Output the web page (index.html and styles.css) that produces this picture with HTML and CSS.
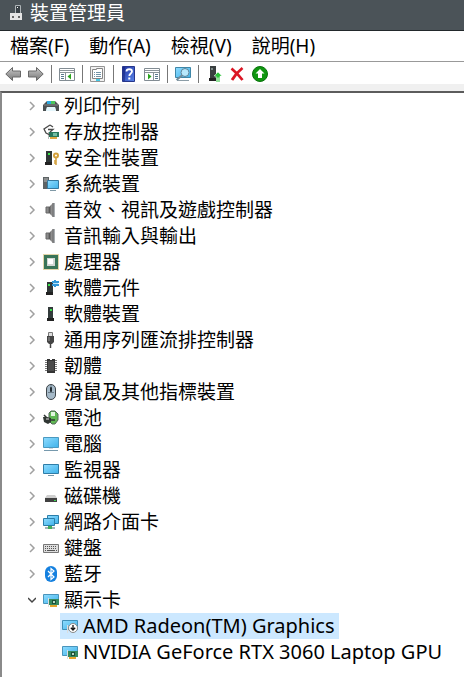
FILE: index.html
```html
<!DOCTYPE html>
<html lang="zh-Hant">

<head>
  <meta charset="UTF-8">
  <meta name="viewport" content="width=device-width, initial-scale=1.0">
  <title>裝置管理員</title>
  <link rel="stylesheet" href="styles.css">
</head>

<body>
  <!-- Icons used more than once -->
  <svg class="defs" aria-hidden="true">
    <defs>
      <linearGradient id="screen" x1="0" y1="0" x2="1" y2="1">
        <stop offset="0" stop-color="#8fdcff" />
        <stop offset="1" stop-color="#3fb2ea" />
      </linearGradient>
      <linearGradient id="metal" x1="0" y1="0" x2="1" y2="0">
        <stop offset="0" stop-color="#4d4d4d" />
        <stop offset="1" stop-color="#b4b4b4" />
      </linearGradient>
      <linearGradient id="arrow" x1="0" y1="0" x2="0" y2="1">
        <stop offset="0" stop-color="#c9c9c9" />
        <stop offset="1" stop-color="#777" />
      </linearGradient>
      <linearGradient id="help" x1="0" y1="0" x2="1" y2="1">
        <stop offset="0" stop-color="#1c2f9e" />
        <stop offset="1" stop-color="#5b86ea" />
      </linearGradient>
    </defs>
    <symbol id="chevron" viewBox="0 0 8 10">
      <path d="M2 1l4 4-4 4" fill="none" stroke="#a0a0a0" stroke-width="1.5" />
    </symbol>
    <symbol id="speaker" viewBox="0 0 16 16">
      <path d="M3 5h3v6H3z" fill="#8a8a8a" stroke="#666" />
      <path d="M6 5l4-4v14l-4-4z" fill="url(#metal)" />
      <path d="M10 1h2v14h-2z" fill="#a9adb0" />
      <path d="M10 1v14" stroke="#555" />
    </symbol>
    <symbol id="display-card" viewBox="0 0 16 16">
      <path d="M.5 2.5h15v9H.5z" fill="url(#screen)" stroke="#4a94bb" />
      <path d="M6 7h10v6H6z" fill="#35895f" />
      <path d="M9 8h4v4H9z" fill="#1c5138" />
      <path d="M10 9h2v2h-2z" fill="#b4d9c2" />
      <path d="M7 13h7v2H7z" fill="#e5a52b" />
      <path d="M5.5 6v9" stroke="#ddd" />
    </symbol>
    <symbol id="tower" viewBox="0 0 16 16">
      <path d="M5 1h5v11H5z" fill="#333b3b" />
      <path d="M4 12h7v3H4z" fill="#222" />
      <path d="M7 3h2v2H7z" fill="#3be34b" />
    </symbol>
  </svg>

  <div class="window">
    <header class="titlebar">
      <svg class="icon" viewBox="0 0 16 16">
        <path d="M7.5.5h5v8h-5z" fill="#394146" stroke="#aeb4b7" />
        <path d="M9 2h1v1H9z" fill="#fff" />
        <path d="M2 8h12v7H2z" fill="#e5e5e5" />
        <path d="M4 11h2v2H4zM10 11h2v2h-2z" fill="#666" />
      </svg>
      <h1>裝置管理員</h1>
    </header>

    <nav class="menubar">
      <button type="button">檔案(F)</button>
      <button type="button">動作(A)</button>
      <button type="button">檢視(V)</button>
      <button type="button">說明(H)</button>
    </nav>

    <div class="toolbar" role="toolbar">
      <button type="button" aria-label="上一頁">
        <svg class="icon" viewBox="0 0 16 16">
          <path d="M.8 8L7.5 1.5V5h8v6h-8v3.5z" fill="url(#arrow)" stroke="#686868" />
        </svg>
      </button>
      <button type="button" aria-label="下一頁">
        <svg class="icon" viewBox="0 0 16 16">
          <path d="M15.2 8L8.500 1.500V5h-8v6h8v3.500z" fill="url(#arrow)" stroke="#686868" />
        </svg>
      </button>
      <span class="separator"></span>
      <button type="button" aria-label="顯示/隱藏主控台樹狀目錄">
        <svg class="icon" viewBox="0 0 16 16">
          <path d="M.5 2.5h15v12H.5z" fill="#fff" stroke="#828c93" />
          <path d="M1 4.5h14M1 6.5h14M6.500 7v7" stroke="#8b9499" />
          <path d="M2 8.5h3M2 10.5h3M2 12.5h3" stroke="#59788d" />
          <path d="M12 7.5v6l-3.500-3z" fill="#2aa51e" />
        </svg>
      </button>
      <span class="separator"></span>
      <button type="button" aria-label="內容">
        <svg class="icon" viewBox="0 0 16 16">
          <path d="M.5.5h14v15H.5z" fill="#f1f1f1" stroke="#959595" />
          <path d="M2.5 3.5h4v-1h6v10h-10z" fill="#fff" stroke="#858585" />
          <path d="M4 6.5h1M6 6.5h5M4 8.5h1M6 8.5h5M4 10.5h1M6 10.5h5" stroke="#7293a7" />
          <path d="M6 14h4" stroke="#43c8e5" stroke-width="2" />
        </svg>
      </button>
      <span class="separator"></span>
      <button type="button" aria-label="說明">
        <svg class="icon" viewBox="0 0 16 16">
          <path d="M1.5.5h12v15h-12z" fill="url(#help)" stroke="#26368b" />
          <path d="M3 1v14" stroke="#172578" />
          <path d="M5.5 5.5c0-3 5.5-3 5.500 0 0 2-2.700 2-2.700 4.500" fill="none" stroke="#fff" stroke-width="1.8" />
          <path d="M7.300 11.500h2v2h-2z" fill="#fff" />
        </svg>
      </button>
      <button type="button" aria-label="動作">
        <svg class="icon" viewBox="0 0 16 16">
          <path d="M.5 2.5h15v12H.5z" fill="#fff" stroke="#828c93" />
          <path d="M1 4.5h14M1 6.5h14M9.500 7v7" stroke="#8b9499" />
          <path d="M11 8.5h3M11 10.5h3M11 12.5h3" stroke="#59788d" />
          <path d="M4 7.5v6l3.500-3z" fill="#2aa51e" />
        </svg>
      </button>
      <span class="separator"></span>
      <button type="button" aria-label="掃描硬體變更">
        <svg class="icon" viewBox="0 0 16 16">
          <path d="M.5 1.5h15v10H.5z" fill="url(#screen)" stroke="#3f87a8" />
          <path d="M2 14.5h12" stroke="#8c9da7" />
          <path d="M7.500 9l-6 5" stroke="#718b9a" stroke-width="2" />
          <circle cx="10" cy="6.5" r="4" fill="#b7e8fc" stroke="#5d8398" />
        </svg>
      </button>
      <span class="separator"></span>
      <button type="button" aria-label="更新驅動程式">
        <svg class="icon" viewBox="0 0 16 16">
          <path d="M4 0h6v12H4z" fill="#3a3f40" />
          <path d="M3 12h7v3H3z" fill="#222" />
          <path d="M5 2h2v2H5z" fill="#7d8989" />
          <path d="M12 6l4 4h-2v2h-4v-2H8z" fill="#2bc239" stroke="#fff" stroke-width=".5" />
          <path d="M10 13h4M10 15h4" stroke="#2bc239" />
        </svg>
      </button>
      <button type="button" aria-label="解除安裝裝置">
        <svg class="icon" viewBox="0 0 16 16">
          <path d="M2.500 2.500Q8 7 13.500 14M13.500 2Q7 7 3 14" fill="none" stroke="#db1624" stroke-width="2.8" />
        </svg>
      </button>
      <button type="button" aria-label="啟用裝置">
        <svg class="icon" viewBox="0 0 16 16">
          <circle cx="8" cy="8" r="7.5" fill="#109610" stroke="#08720b" />
          <path d="M8 3l4.500 4.500H10V12H6V7.500H3.500z" fill="#fff" />
        </svg>
      </button>
    </div>

    <main class="content">
      <ul class="tree">
        <li>
          <div class="row">
            <button class="toggle" type="button" aria-label="展開"><svg><use href="#chevron" /></svg></button>
            <svg class="icon" viewBox="0 0 16 16">
              <path d="M2 5l2-2h8l2 2 2 2v6h-3l-1-4H4l-1 4H0V7z" fill="#4b5052" />
              <path d="M4 3h4v3H4z" fill="#2fa8df" />
              <path d="M8 3h4v3H8z" fill="#4bc45c" />
              <path d="M1 7h14" stroke="#888" />
              <path d="M4 9h8l1 4H3z" fill="#e4f6fc" />
            </svg>
            <span class="label">列印佇列</span>
          </div>
        </li>
        <li>
          <div class="row">
            <button class="toggle" type="button" aria-label="展開"><svg><use href="#chevron" /></svg></button>
            <svg class="icon" viewBox="0 0 16 16">
              <path d="M6 8h10v5H6z" fill="#28785c" />
              <path d="M10 9h4v3h-4z" fill="#70bda2" />
              <path d="M7 13h7v2H7z" fill="#dca842" />
              <path d="M5.5 8v7" stroke="#bbb" />
              <path d="M7 1L1 5l2 4 4 2" fill="none" stroke="#4b4b4b" stroke-width="1.3" />
              <path d="M7 1l3 2M5 5.500h5L7 8" fill="none" stroke="#4b4b4b" stroke-width="1.300" />
            </svg>
            <span class="label">存放控制器</span>
          </div>
        </li>
        <li>
          <div class="row">
            <button class="toggle" type="button" aria-label="展開"><svg><use href="#chevron" /></svg></button>
            <svg class="icon" viewBox="0 0 16 16">
              <path d="M3 1h6v11H3z" fill="#303737" />
              <path d="M2 12h7v3H2z" fill="#222" />
              <path d="M5 3h2v2H5z" fill="#3be34b" />
              <circle cx="13" cy="5.5" r="2" fill="#fff" stroke="#d4a03b" stroke-width="2" />
              <path d="M13 8v7M11 11h2M11 13h2" stroke="#d4a03b" stroke-width="1.5" />
            </svg>
            <span class="label">安全性裝置</span>
          </div>
        </li>
        <li>
          <div class="row">
            <button class="toggle" type="button" aria-label="展開"><svg><use href="#chevron" /></svg></button>
            <svg class="icon" viewBox="0 0 16 16">
              <path d="M0 1h6v12H0z" fill="#5d6365" />
              <path d="M1 3h4M1 5h4" stroke="#bbb" />
              <path d="M4.5 4.5h11v8h-11z" fill="url(#screen)" stroke="#3579a0" />
              <path d="M7 14.5h6" stroke="#8099a6" />
            </svg>
            <span class="label">系統裝置</span>
          </div>
        </li>
        <li>
          <div class="row">
            <button class="toggle" type="button" aria-label="展開"><svg><use href="#chevron" /></svg></button>
            <svg class="icon"><use href="#speaker" /></svg>
            <span class="label">音效、視訊及遊戲控制器</span>
          </div>
        </li>
        <li>
          <div class="row">
            <button class="toggle" type="button" aria-label="展開"><svg><use href="#chevron" /></svg></button>
            <svg class="icon"><use href="#speaker" /></svg>
            <span class="label">音訊輸入與輸出</span>
          </div>
        </li>
        <li>
          <div class="row">
            <button class="toggle" type="button" aria-label="展開"><svg><use href="#chevron" /></svg></button>
            <svg class="icon" viewBox="0 0 16 16">
              <path d="M.5.5h15v15H.5z" fill="none" stroke="#c5ac54" stroke-dasharray="1 1" />
              <path d="M1 1h14v14H1z" fill="#397558" />
              <path d="M4 4h8v8H4z" fill="#d2d8d4" />
              <path d="M5 5h5v5H5z" fill="#fff" />
            </svg>
            <span class="label">處理器</span>
          </div>
        </li>
        <li>
          <div class="row">
            <button class="toggle" type="button" aria-label="展開"><svg><use href="#chevron" /></svg></button>
            <svg class="icon" viewBox="0 0 16 16">
              <path d="M4 2h6v10H4z" fill="#303737" />
              <path d="M3 12h7v3H3z" fill="#222" />
              <path d="M5 4h2v2H5z" fill="#3be34b" />
              <path d="M9 1h2V0h2v1h3v2h-1v1h1v2h-3v1h-2V6H9V4h1V3H9z" fill="#3197d8" />
              <path d="M10 3.5h5" stroke="#b5e2fa" />
            </svg>
            <span class="label">軟體元件</span>
          </div>
        </li>
        <li>
          <div class="row">
            <button class="toggle" type="button" aria-label="展開"><svg><use href="#chevron" /></svg></button>
            <svg class="icon"><use href="#tower" /></svg>
            <span class="label">軟體裝置</span>
          </div>
        </li>
        <li>
          <div class="row">
            <button class="toggle" type="button" aria-label="展開"><svg><use href="#chevron" /></svg></button>
            <svg class="icon" viewBox="0 0 16 16">
              <path d="M5.5.5h4v4h-4z" fill="#ddd" stroke="#777" />
              <path d="M4 4h7v6l-2 2H6l-2-2z" fill="#444" />
              <path d="M7.5 12v4" stroke="#444" stroke-width="1.5" />
              <path d="M6 5v4" stroke="#999" />
            </svg>
            <span class="label">通用序列匯流排控制器</span>
          </div>
        </li>
        <li>
          <div class="row">
            <button class="toggle" type="button" aria-label="展開"><svg><use href="#chevron" /></svg></button>
            <svg class="icon" viewBox="0 0 16 16">
              <path d="M2 2.5h12M2 4.5h12M2 6.5h12M2 8.5h12M2 10.5h12M2 12.5h12" stroke="#777" />
              <path d="M4 1h3v1h2V1h3v14H4z" fill="#333" />
              <path d="M5 3h6v10H5z" fill="#4b4b4b" />
            </svg>
            <span class="label">韌體</span>
          </div>
        </li>
        <li>
          <div class="row">
            <button class="toggle" type="button" aria-label="展開"><svg><use href="#chevron" /></svg></button>
            <svg class="icon" viewBox="0 0 16 16">
              <rect x="3.5" y=".5" width="9" height="15" rx="4.5" fill="#a5b9c8" stroke="#3d4449" />
              <path d="M8 1v7M5 8.5h6" stroke="#6b7c88" />
              <rect x="7" y="3" width="2" height="5" rx="1" fill="#222c33" />
            </svg>
            <span class="label">滑鼠及其他指標裝置</span>
          </div>
        </li>
        <li>
          <div class="row">
            <button class="toggle" type="button" aria-label="展開"><svg><use href="#chevron" /></svg></button>
            <svg class="icon" viewBox="0 0 16 16">
              <path d="M6 3l2-2h4l3 3v6l-3 4H9l-3-3z" fill="#5fb853" stroke="#55685a" />
              <path d="M8 2h4v4H8z" fill="#e2f5df" />
              <path d="M0 7h4l4 1v4l-3 2-4-2z" fill="#303633" />
              <path d="M1 5l3 3M8 10h4" fill="none" stroke="#303633" stroke-width="1.5" />
              <path d="M3 9h3" stroke="#ddd" />
            </svg>
            <span class="label">電池</span>
          </div>
        </li>
        <li>
          <div class="row">
            <button class="toggle" type="button" aria-label="展開"><svg><use href="#chevron" /></svg></button>
            <svg class="icon" viewBox="0 0 16 16">
              <path d="M.5 1.5h15v10H.5z" fill="url(#screen)" stroke="#4a99c0" />
              <path d="M6 12h4v1H6z" fill="#ccd8df" />
              <path d="M1 14.5h14" stroke="#7699ad" />
            </svg>
            <span class="label">電腦</span>
          </div>
        </li>
        <li>
          <div class="row">
            <button class="toggle" type="button" aria-label="展開"><svg><use href="#chevron" /></svg></button>
            <svg class="icon" viewBox="0 0 16 16">
              <path d="M.5 2.5h15v9H.5z" fill="url(#screen)" stroke="#2f7da7" />
              <path d="M5 13.5h6" stroke="#7795a5" />
            </svg>
            <span class="label">監視器</span>
          </div>
        </li>
        <li>
          <div class="row">
            <button class="toggle" type="button" aria-label="展開"><svg><use href="#chevron" /></svg></button>
            <svg class="icon" viewBox="0 0 16 16">
              <path d="M4 7h8l2 3H2z" fill="#cfcfcf" />
              <path d="M2 10h12v4H2z" fill="#414141" />
              <path d="M11 12h2v1h-2z" fill="#3bdb50" />
            </svg>
            <span class="label">磁碟機</span>
          </div>
        </li>
        <li>
          <div class="row">
            <button class="toggle" type="button" aria-label="展開"><svg><use href="#chevron" /></svg></button>
            <svg class="icon" viewBox="0 0 16 16">
              <path d="M4.5 1.5h11v8h-11z" fill="url(#screen)" stroke="#2b7eaa" />
              <path d="M.5 4.5h11v7H.5z" fill="url(#screen)" stroke="#2b7eaa" />
              <path d="M2 14h10" stroke="#a2b4ba" stroke-width="2" />
              <path d="M5 12h4v3H5z" fill="#43ad5a" />
            </svg>
            <span class="label">網路介面卡</span>
          </div>
        </li>
        <li>
          <div class="row">
            <button class="toggle" type="button" aria-label="展開"><svg><use href="#chevron" /></svg></button>
            <svg class="icon" viewBox="0 0 16 16">
              <path d="M.5 4.5h15v8H.5z" fill="#ddd" stroke="#777" />
              <path d="M2 6.5h12M2 8.5h12" stroke="#555" stroke-dasharray="1 1" />
              <path d="M2 10.5h1M4 10.5h8M13 10.5h1" stroke="#555" />
            </svg>
            <span class="label">鍵盤</span>
          </div>
        </li>
        <li>
          <div class="row">
            <button class="toggle" type="button" aria-label="展開"><svg><use href="#chevron" /></svg></button>
            <svg class="icon" viewBox="0 0 16 16">
              <rect x="2" width="12" height="16" rx="6" fill="#1580df" />
              <path d="M5 5l6 6-3 2.500v-11L11 5l-6 6" fill="none" stroke="#fff" stroke-width="1.2" />
            </svg>
            <span class="label">藍牙</span>
          </div>
        </li>
        <li>
          <div class="row">
            <button class="toggle" type="button" aria-label="摺疊" aria-expanded="true">
              <svg viewBox="0 0 8 10"><path d="M0 3l4 4 4-4" fill="none" stroke="#444" stroke-width="1.5" /></svg>
            </button>
            <svg class="icon"><use href="#display-card" /></svg>
            <span class="label">顯示卡</span>
          </div>
          <ul class="devices">
            <li>
              <div class="row selected">
                <svg class="icon" viewBox="0 0 16 16">
                  <path d="M.5 2.5h15v9H.5z" fill="url(#screen)" stroke="#3f8fb8" />
                  <path d="M5.5 7v8" stroke="#ddd" />
                  <circle cx="11" cy="10" r="4.500" fill="#fff" stroke="#888" />
                  <path d="M11 7v5M8.800 9.800L11 12l2.200-2.200" fill="none" stroke="#111" stroke-width="1.3" />
                </svg>
                <span class="label">AMD Radeon(TM) Graphics</span>
              </div>
            </li>
            <li>
              <div class="row">
                <svg class="icon"><use href="#display-card" /></svg>
                <span class="label">NVIDIA GeForce RTX 3060 Laptop GPU</span>
              </div>
            </li>
          </ul>
        </li>
      </ul>
    </main>
  </div>
</body>

</html>
```
FILE: styles.css
```css
* {
  box-sizing: border-box;
}

body {
  margin: 0;
  background: #fff;
  color: #000;
  font-family: "Noto Sans", "Noto Sans CJK TC", sans-serif;
  font-size: 19px;
}

button {
  padding: 0;
  border: none;
  background: none;
  color: inherit;
  font: inherit;
}

ul {
  margin: 0;
  padding: 0;
  list-style: none;
}

.defs {
  position: absolute;
  width: 0;
  height: 0;
}

.icon {
  display: block;
  flex: none;
  width: 16px;
  height: 16px;
}

.window {
  display: flex;
  flex-direction: column;
  min-height: 100vh;
}

.titlebar {
  display: flex;
  align-items: center;
  gap: 6px;
  height: 31px;
  padding: 0 8px 4px;
  border-bottom: 1px solid #22282b;
  background: #4b5358;
  color: #fff;
}

.titlebar h1 {
  margin: 0;
  font-size: 19px;
  font-weight: normal;
  line-height: 26px;
}

.menubar {
  display: flex;
  align-items: center;
  gap: 20px;
  height: 31px;
  padding: 0 10px;
  border-bottom: 1px solid #999;
}

.menubar button {
  line-height: 30px;
}

.toolbar {
  display: flex;
  align-items: center;
  gap: 7px;
  height: 29px;
  padding: 2px 5px 0;
  border-bottom: 7px solid #f0f0f0;
}

.separator {
  width: 1px;
  height: 18px;
  background: #777;
}

.content {
  flex: 1;
  border-top: 2px solid #5c5c5c;
  border-left: 2px solid #8a8a8a;
}

.row {
  display: flex;
  align-items: center;
  width: max-content;
  height: 26px;
  line-height: 26px;
  white-space: nowrap;
}

.tree > li > .row {
  padding-left: 26px;
}

.toggle {
  width: 8px;
  height: 10px;
  margin-right: 7px;
}

.toggle svg {
  display: block;
  width: 8px;
  height: 10px;
}

.label {
  margin-left: 5px;
}

.devices {
  padding-left: 58px;
  font-size: 20px;
}

.devices .row {
  padding: 0 4px 0 2px;
}

.selected {
  background: #cce8ff;
}
```
